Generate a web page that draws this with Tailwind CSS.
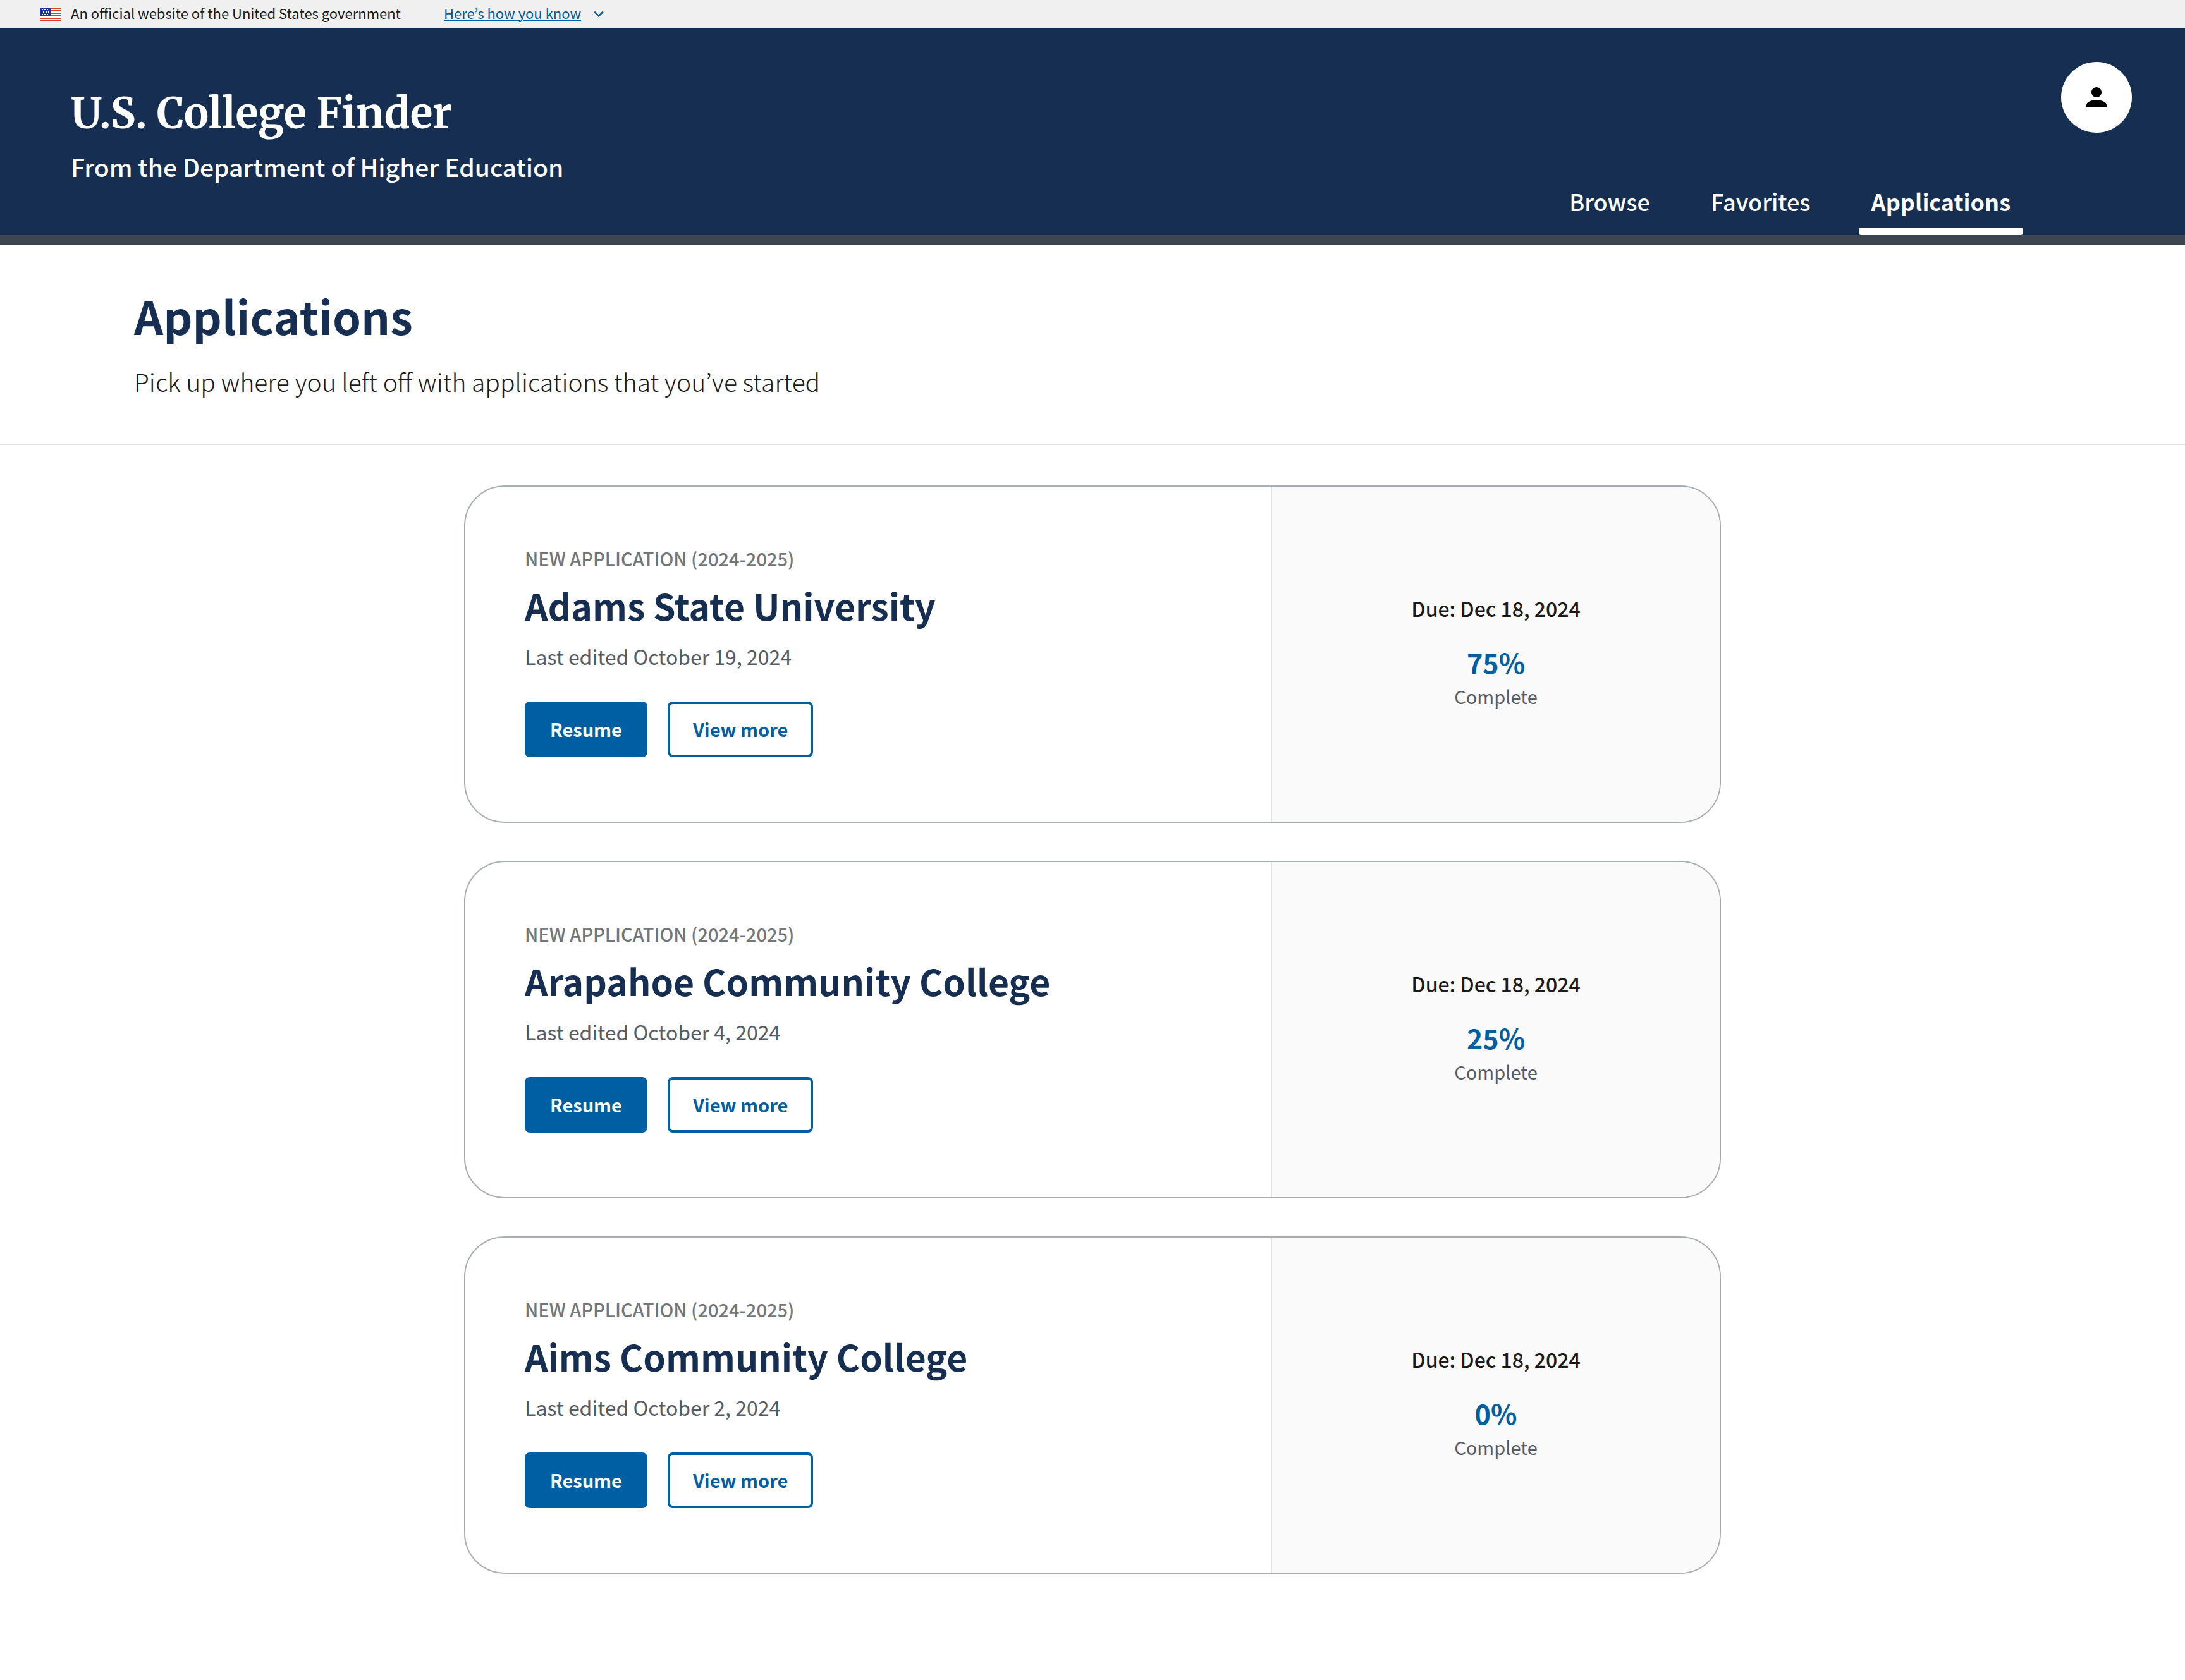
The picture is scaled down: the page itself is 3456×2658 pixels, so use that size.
<!DOCTYPE html>
<html lang="en">
<head>
<meta charset="utf-8">
<meta name="viewport" content="width=device-width, initial-scale=1">
<title>Applications | U.S. College Finder</title>
<script src="https://cdn.jsdelivr.net/npm/@tailwindcss/browser@4"></script>
</head>
<body class="min-h-screen bg-white font-['Source_Sans_Pro','Noto_Sans_CJK_KR','Noto_Sans',sans-serif] text-[#1b1b1b]">

<!-- Government banner -->
<div class="flex h-11 items-start bg-[#f0f0f0] px-16 text-[22px] leading-10">
  <svg class="mt-3 h-[22px] w-8 shrink-0" viewBox="0 0 32 22" shape-rendering="crispEdges" aria-hidden="true">
    <path fill="#fff" d="M0 0h32v22H0z"/>
    <path fill="#db3e1f" d="M0 0h32v2H0zM0 4h32v2H0zM0 8h32v2H0zM0 12h32v2H0zM0 16h32v2H0zM0 20h32v2H0z"/>
    <path fill="#1e33b1" d="M0 0h16v14H0z"/>
    <path fill="#fff" d="M2 2h2v2H2zM6 2h2v2H6zM10 2h2v2h-2zM4 6h2v2H4zM8 6h2v2H8zM12 6h2v2h-2zM2 10h2v2H2zM6 10h2v2H6zM10 10h2v2h-2z"/>
  </svg>
  <p class="ml-4">An official website of the United States government</p>
  <button type="button" class="ml-[68px] flex items-start text-[#005ea2]">
    <span class="underline decoration-1 underline-offset-2">Here’s how you know</span>
    <svg class="ml-5 mt-[17px] h-3 w-4" viewBox="0 0 16 12" fill="none" stroke="currentColor" stroke-width="2.6" aria-hidden="true"><path d="M1.2 1.6 8 8.4l6.800-6.800"/></svg>
  </button>
</div>

<!-- Site header -->
<header class="flex h-[344px] justify-between border-b-[16px] border-[#3d4551] bg-[#162e51] text-white">
  <div class="pl-28 pt-[94px]">
    <a href="#" class="block font-['Merriweather','Noto_Serif',serif] text-[66px] font-bold leading-[84px]">U.S. College Finder</a>
    <p class="mt-[13px] text-[39px] font-medium leading-[56px]">From the Department of Higher Education</p>
  </div>
  <div class="flex flex-col items-end justify-between pt-[54px]">
    <button type="button" aria-label="Account" class="mr-[84px] flex size-28 items-center justify-center rounded-full bg-white text-black">
      <svg class="size-12" viewBox="0 0 24 24" fill="currentColor" aria-hidden="true"><path d="M12 12c2.210 0 4-1.790 4-4s-1.790-4-4-4-4 1.790-4 4 1.790 4 4 4zm0 2c-2.670 0-8 1.340-8 4v2h16v-2c0-2.660-5.330-4-8-4z"/></svg>
    </button>
    <nav class="mr-64 flex gap-14 text-4xl font-medium leading-[52px]" aria-label="Primary">
      <a href="#" class="px-5 leading-[52px]">Browse</a>
      <a href="#" class="px-5 leading-[52px]">Favorites</a>
      <a href="#" aria-current="page" class="flex flex-col font-bold leading-[52px]">
        <span class="px-5">Applications</span>
        <span class="mt-4 h-3 rounded bg-white"></span>
      </a>
    </nav>
  </div>
</header>

<main>
  <section class="border-b-2 border-[#dfe1e2] px-[212px] pb-[69px] pt-[67px]">
    <h1 class="text-7xl font-bold leading-[88px] text-[#162e51]">Applications</h1>
    <p class="mt-[30px] text-[39px] font-light leading-[60px]">Pick up where you left off with applications that you’ve started</p>
  </section>

  <ul class="mx-auto flex max-w-[1988px] flex-col gap-[60px] py-16">
    <li class="flex overflow-hidden rounded-[64px] border-2 border-[#a9aeb1]">
      <div class="flex-1 pb-[102px] pl-[94px] pt-[93px]">
        <p class="text-[29px] font-medium leading-10 text-[#71767a]">NEW APPLICATION (2024-2025)</p>
        <h2 class="mt-[18px] text-[57px] font-bold leading-[72px] text-[#162e51]">Adams State University</h2>
        <p class="mt-[25px] text-[32px] leading-10 text-[#565c65]">Last edited October 19, 2024</p>
        <div class="mt-[52px] flex gap-8 text-[29px] font-bold leading-[78px]">
          <button type="button" class="rounded-lg border-4 border-[#005ea2] bg-[#005ea2] px-9 pb-[2px] text-white">Resume</button>
          <button type="button" class="rounded-lg border-4 border-[#005ea2] px-9 pb-[2px] text-[#005ea2]">View more</button>
        </div>
      </div>
      <div class="flex w-[710px] flex-col items-center justify-center border-l-2 border-[#dfe1e2] bg-[#fafafa] pb-1">
        <p class="text-[32px] font-medium leading-10">Due: Dec 18, 2024</p>
        <p class="mt-[37px] text-[43px] font-bold leading-[56px] text-[#005ea2]">75%</p>
        <p class="mt-[2px] text-[29px] leading-[48px] text-[#565c65]">Complete</p>
      </div>
    </li>
    <li class="flex overflow-hidden rounded-[64px] border-2 border-[#a9aeb1]">
      <div class="flex-1 pb-[102px] pl-[94px] pt-[93px]">
        <p class="text-[29px] font-medium leading-10 text-[#71767a]">NEW APPLICATION (2024-2025)</p>
        <h2 class="mt-[18px] text-[57px] font-bold leading-[72px] text-[#162e51]">Arapahoe Community College</h2>
        <p class="mt-[25px] text-[32px] leading-10 text-[#565c65]">Last edited October 4, 2024</p>
        <div class="mt-[52px] flex gap-8 text-[29px] font-bold leading-[78px]">
          <button type="button" class="rounded-lg border-4 border-[#005ea2] bg-[#005ea2] px-9 pb-[2px] text-white">Resume</button>
          <button type="button" class="rounded-lg border-4 border-[#005ea2] px-9 pb-[2px] text-[#005ea2]">View more</button>
        </div>
      </div>
      <div class="flex w-[710px] flex-col items-center justify-center border-l-2 border-[#dfe1e2] bg-[#fafafa] pb-1">
        <p class="text-[32px] font-medium leading-10">Due: Dec 18, 2024</p>
        <p class="mt-[37px] text-[43px] font-bold leading-[56px] text-[#005ea2]">25%</p>
        <p class="mt-[2px] text-[29px] leading-[48px] text-[#565c65]">Complete</p>
      </div>
    </li>
    <li class="flex overflow-hidden rounded-[64px] border-2 border-[#a9aeb1]">
      <div class="flex-1 pb-[102px] pl-[94px] pt-[93px]">
        <p class="text-[29px] font-medium leading-10 text-[#71767a]">NEW APPLICATION (2024-2025)</p>
        <h2 class="mt-[18px] text-[57px] font-bold leading-[72px] text-[#162e51]">Aims Community College</h2>
        <p class="mt-[25px] text-[32px] leading-10 text-[#565c65]">Last edited October 2, 2024</p>
        <div class="mt-[52px] flex gap-8 text-[29px] font-bold leading-[78px]">
          <button type="button" class="rounded-lg border-4 border-[#005ea2] bg-[#005ea2] px-9 pb-[2px] text-white">Resume</button>
          <button type="button" class="rounded-lg border-4 border-[#005ea2] px-9 pb-[2px] text-[#005ea2]">View more</button>
        </div>
      </div>
      <div class="flex w-[710px] flex-col items-center justify-center border-l-2 border-[#dfe1e2] bg-[#fafafa] pb-1">
        <p class="text-[32px] font-medium leading-10">Due: Dec 18, 2024</p>
        <p class="mt-[37px] text-[43px] font-bold leading-[56px] text-[#005ea2]">0%</p>
        <p class="mt-[2px] text-[29px] leading-[48px] text-[#565c65]">Complete</p>
      </div>
    </li>
  </ul>
</main>
</body>
</html>
